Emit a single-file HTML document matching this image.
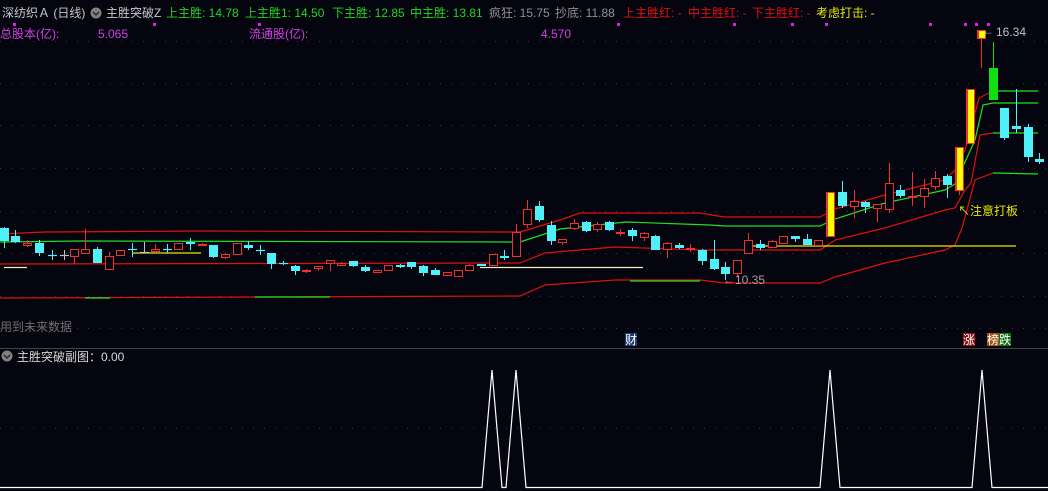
<!DOCTYPE html>
<html><head><meta charset="utf-8">
<style>
html,body{margin:0;padding:0;background:#05050f;}
body{width:1048px;height:491px;overflow:hidden;}
svg{display:block;}
text{font-family:"Liberation Sans","Noto Sans CJK SC",sans-serif;font-size:12px;}
</style></head><body>
<svg id="s" width="1048" height="491" xmlns="http://www.w3.org/2000/svg">
<rect width="1048" height="491" fill="#05050f"/>
<g stroke="#3a3a44" stroke-dasharray="1 10" stroke-width="1">
<line x1="0" y1="41.5" x2="1048" y2="41.5"/>
<line x1="0" y1="83.5" x2="1048" y2="83.5"/>
<line x1="0" y1="125.5" x2="1048" y2="125.5"/>
<line x1="0" y1="168.5" x2="1048" y2="168.5"/>
<line x1="0" y1="211.5" x2="1048" y2="211.5"/>
<line x1="0" y1="253.5" x2="1048" y2="253.5"/>
<line x1="0" y1="296.5" x2="1048" y2="296.5"/>
<line x1="0" y1="328.5" x2="1048" y2="328.5"/>
<line x1="0" y1="428.5" x2="1048" y2="428.5"/>
</g>
<line x1="0" y1="348.5" x2="1048" y2="348.5" stroke="#444" stroke-width="1"/>
<!-- header -->
<text x="2" y="17" fill="#c8c8c8">深纺织Ａ (日线)</text>
<circle cx="96" cy="13" r="5.5" fill="#808080"/><path d="M93 12 L96 15 L99 12" stroke="#222" stroke-width="1.3" fill="none"/>
<text x="106" y="17" fill="#c8c8c8">主胜突破Z</text>
<text x="166" y="17" fill="#1ed81e">上主胜: 14.78</text>
<text x="245" y="17" fill="#1ed81e">上主胜1: 14.50</text>
<text x="332" y="17" fill="#1ed81e">下主胜: 12.85</text>
<text x="410" y="17" fill="#1ed81e">中主胜: 13.81</text>
<text x="489" y="17" fill="#909090">疯狂: 15.75</text>
<text x="555" y="17" fill="#909090">抄底: 11.88</text>
<text x="623" y="17" fill="#e01010">上主胜红: -</text>
<text x="688" y="17" fill="#e01010">中主胜红: -</text>
<text x="752" y="17" fill="#e01010">下主胜红: -</text>
<text x="816" y="17" fill="#e8e800">考虑打击: -</text>
<text x="0" y="38" fill="#d040e0">总股本(亿):</text>
<text x="98" y="38" fill="#d040e0">5.065</text>
<text x="249" y="38" fill="#d040e0">流通股(亿):</text>
<text x="541" y="38" fill="#d040e0">4.570</text>
<g fill="#e020e0">
<rect x="13" y="23" width="3" height="3"/><rect x="153" y="23" width="3" height="3"/><rect x="258" y="23" width="3" height="3"/>
<rect x="617" y="23" width="3" height="3"/><rect x="733" y="23" width="3" height="3"/><rect x="791" y="23" width="3" height="3"/>
<rect x="825" y="23" width="3" height="3"/><rect x="929" y="23" width="3" height="3"/><rect x="964" y="23" width="3" height="3"/>
<rect x="975" y="23" width="3" height="3"/><rect x="987" y="23" width="3" height="3"/>
</g>
<!-- band lines -->
<g fill="none" stroke-width="1.2">
<polyline stroke="#e01010" points="0,234 45,232 200,231 520,232 560,220 580,213 700,213 724,217 820,217 835,209 885,195 945,180 955,170 965,150 979,98 993,91"/>
<polyline stroke="#20e020" points="993,91 1038,91"/>
<polyline stroke="#20e020" points="0,242 80,241 520,242 560,229 626,222 710,225 724,226 820,226 835,219 885,203 945,190 955,184 975,140 983,105 993,103 1038,103"/>
<polyline stroke="#e01010" points="0,264 520,263 545,253 615,247 700,250 820,250 835,240 885,228 945,210 955,208 965,190 971,183 980,135 993,133"/>
<polyline stroke="#20e020" points="993,133 1038,133"/>
<polyline stroke="#e01010" points="0,298 520,296 545,285 615,280 700,280 724,283 820,283 835,277 885,263 945,250 955,245 962,228 975,180 993,173"/>
<polyline stroke="#20e020" points="993,173 1038,174"/>
<polyline stroke="#20e020" points="85,298 110,298"/><polyline stroke="#20e020" points="255,297 330,297"/>
<polyline stroke="#20e020" points="630,281 700,281"/>
</g>
<g stroke-width="1.2">
<line x1="133" y1="253" x2="201" y2="253" stroke="#e8e800"/>
<line x1="4" y1="267.5" x2="27" y2="267.5" stroke="#f0f0c0"/>
<line x1="480" y1="267.5" x2="643" y2="267.5" stroke="#f0f0c0"/>
<line x1="744" y1="246" x2="1016" y2="246" stroke="#e8e800"/>
</g>
<g id="c"></g>
<text x="723" y="284" fill="#a0a0a0">←10.35</text>
<text x="982" y="35" fill="#b0b0b0">←</text><text x="996" y="36" fill="#c0c0c0">16.34</text>
<text x="958" y="215" fill="#e8e800">↖注意打板</text>
<text x="0" y="331" fill="#707070">用到未来数据</text>
<rect x="625" y="333" width="12" height="13" fill="#1a3a70"/><text x="625" y="344" fill="#fff">财</text>
<rect x="963" y="333" width="12" height="13" fill="#8a1010"/><text x="963" y="344" fill="#fff">涨</text>
<rect x="987" y="333" width="12" height="13" fill="#a05010"/><text x="987" y="344" fill="#fff">榜</text>
<rect x="999" y="333" width="12" height="13" fill="#107010"/><text x="999" y="344" fill="#fff">跌</text>
<!-- sub chart -->
<circle cx="7" cy="356" r="5.5" fill="#808080"/><path d="M4 355 L7 358 L10 355" stroke="#222" stroke-width="1.3" fill="none"/>
<text x="17" y="361" fill="#d8d8d8">主胜突破副图：0.00</text>
<g fill="none" stroke="#ffffff" stroke-width="1.2">
<polyline points="0,487.5 482,487.5 492,370 502,487.5 506,487.5 516,370 526,487.5 820,487.5 830,370 840,487.5 972,487.5 982,370 992,487.5 1048,487.5"/>
</g>
</svg>
<script>
var d=[[0,228,241,227,248,'c'],[11,236,242,230,243,'c'],[23,243,246,240,247,'r'],[35,243,253,240,256,'c'],[48,255,255,250,260,'c'],[60,255,255,250,260,'w'],[70,249,257,249,264,'r'],[81,249,254,229,254,'r'],[93,249,263,247,263,'c'],[105,256,270,252,270,'r'],[116,250,256,250,256,'r'],[128,249,249,243,257,'c'],[140,252,252,242,252,'w'],[151,249,252,244,253,'r'],[163,249,249,244,253,'c'],[174,243,250,243,250,'r'],[186,242,244,238,250,'c'],[198,244,246,243,246,'r'],[209,245,257,245,258,'c'],[221,254,258,253,259,'r'],[233,243,255,243,255,'r'],[244,245,248,241,250,'c'],[256,250,250,245,255,'c'],[267,253,264,253,269,'c'],[279,263,263,261,265,'c'],[291,266,271,265,275,'c'],[302,270,272,269,273,'r'],[314,266,269,266,271,'r'],[326,260,264,260,271,'r'],[337,263,266,262,266,'r'],[349,261,266,261,267,'c'],[361,267,271,265,272,'c'],[373,270,273,270,273,'r'],[384,265,271,265,271,'r'],[396,265,267,264,268,'c'],[407,262,267,262,269,'c'],[419,266,273,265,276,'c'],[431,270,275,268,275,'c'],[443,272,276,272,276,'r'],[454,270,277,270,277,'r'],[465,265,271,264,271,'r'],[477,264,266,264,266,'c'],[489,254,266,254,266,'r'],[500,256,258,250,260,'c'],
[512,232,257,224,257,'r'],[523,209,225,200,228,'r'],[535,206,220,201,222,'c'],[547,225,241,221,245,'c'],[558,239,243,239,245,'r'],[570,223,229,219,230,'r'],[582,222,231,221,232,'c'],[593,224,230,222,232,'r'],[605,222,230,221,231,'c'],[616,232,233,229,236,'r'],[628,230,236,228,241,'c'],[640,233,238,232,241,'r'],[651,236,250,235,250,'c'],[663,243,250,242,258,'r'],[675,245,248,243,249,'c'],[686,248,249,244,252,'r'],[698,250,261,249,265,'c'],[710,259,269,240,270,'c'],[721,267,274,262,280,'c'],[733,260,274,260,277,'r'],[744,240,254,233,254,'r'],[756,244,248,240,250,'c'],[768,241,248,240,248,'r'],[779,236,244,236,244,'r'],[791,236,239,236,242,'c'],[803,239,245,234,245,'c'],[814,240,246,240,246,'r'],[826,192,237,192,237,'y'],[838,192,206,181,208,'c'],[850,201,207,190,218,'r'],[861,202,207,201,213,'c'],[873,204,209,204,222,'r'],[885,183,210,163,213,'r'],[896,190,196,185,198,'c'],[908,196,198,172,206,'r'],[920,188,197,179,208,'r'],[931,178,187,171,190,'r'],[943,176,185,174,198,'c'],[955,147,191,147,195,'y'],[966,89,144,89,144,'y'],[977,30,39,30,68,'y'],[989,68,100,42,100,'g'],[1000,108,138,108,140,'c'],[1012,126,129,89,133,'c'],[1024,127,157,124,162,'c'],[1035,159,162,153,164,'c']];
var g=document.getElementById('c'),ns='http://www.w3.org/2000/svg',h='';
d.forEach(function(a){var x=a[0],t=a[1],b=a[2],wt=a[3],wb=a[4],k=a[5],w=9,cx=x+4.5;
var col=k=='c'?'#50f0f8':k=='r'?'#f03030':k=='g'?'#10e010':k=='w'?'#c0c0c0':'#f03030';
h+='<line x1="'+cx+'" y1="'+wt+'" x2="'+cx+'" y2="'+wb+'" stroke="'+col+'" stroke-width="1"/>';
var hh=Math.max(b-t,1);
if(k=='r')h+='<rect x="'+(x+0.5)+'" y="'+(t+0.5)+'" width="'+(w-1)+'" height="'+Math.max(hh-1,1)+'" fill="#05050f" stroke="#f03030" stroke-width="1"/>';
else if(k=='y')h+='<rect x="'+x+'" y="'+t+'" width="'+w+'" height="'+hh+'" fill="#f03030"/><rect x="'+(x+2)+'" y="'+(t+1)+'" width="'+(w-3)+'" height="'+(hh-2)+'" fill="#ffff00"/>';
else if(b==t)h+='<line x1="'+x+'" y1="'+(t+0.5)+'" x2="'+(x+w)+'" y2="'+(t+0.5)+'" stroke="'+col+'" stroke-width="1.2"/>';
else h+='<rect x="'+x+'" y="'+t+'" width="'+w+'" height="'+hh+'" fill="'+col+'"/>';});
g.innerHTML=h;
</script>
</body></html>
